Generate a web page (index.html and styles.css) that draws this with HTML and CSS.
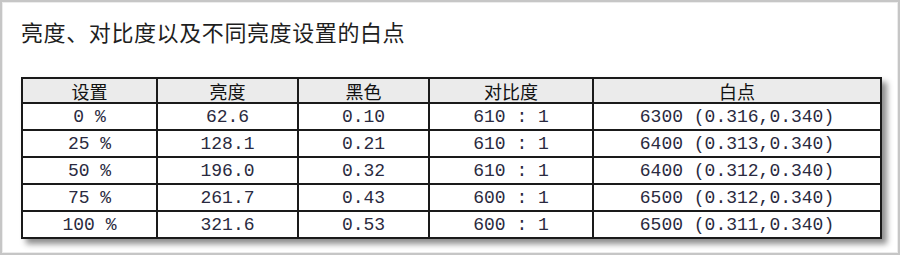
FILE: index.html
```html
<!DOCTYPE html>
<html lang="zh">
<head>
<meta charset="utf-8">
<link rel="stylesheet" href="styles.css">
</head>
<body>
<div class="frame">
  <h1 class="title">亮度、对比度以及不同亮度设置的白点</h1>
  <table class="data">
    <colgroup>
      <col class="c1"><col class="c2"><col class="c3"><col class="c4"><col class="c5">
    </colgroup>
    <thead>
      <tr><th>设置</th><th>亮度</th><th>黑色</th><th>对比度</th><th>白点</th></tr>
    </thead>
    <tbody>
      <tr><td>0 %</td><td>62.6</td><td>0.10</td><td>610 : 1</td><td>6300 (0.316,0.340)</td></tr>
      <tr><td>25 %</td><td>128.1</td><td>0.21</td><td>610 : 1</td><td>6400 (0.313,0.340)</td></tr>
      <tr><td>50 %</td><td>196.0</td><td>0.32</td><td>610 : 1</td><td>6400 (0.312,0.340)</td></tr>
      <tr><td>75 %</td><td>261.7</td><td>0.43</td><td>600 : 1</td><td>6500 (0.312,0.340)</td></tr>
      <tr><td>100 %</td><td>321.6</td><td>0.53</td><td>600 : 1</td><td>6500 (0.311,0.340)</td></tr>
    </tbody>
  </table>
</div>
</body>
</html>
```
FILE: styles.css
```css
html, body {
  margin: 0;
  padding: 0;
  background: #ffffff;
}
.frame {
  box-sizing: border-box;
  width: 900px;
  height: 255px;
  border: 2px solid #c6c6c6;
  box-shadow: inset 0 0 0 1px #ececec;
  padding: 16px 0 0 19px;
  background: #ffffff;
}
.title {
  margin: 0;
  font-family: "Noto Sans CJK SC", sans-serif;
  font-weight: normal;
  font-size: 22px;
  line-height: 26px;
  color: #1e1e1e;
  letter-spacing: 0.6px;
}
.data {
  margin-top: 33px;
  border-collapse: collapse;
  table-layout: fixed;
  width: 859px;
  border: 2px solid #1a1a1a;
  box-shadow: 5px 5px 6px rgba(0, 0, 0, 0.45);
  background: #ffffff;
}
.c1 { width: 135px; }
.c2 { width: 141px; }
.c3 { width: 131px; }
.c4 { width: 164px; }
.c5 { width: 288px; }
.data th,
.data td {
  border: 2px solid #1a1a1a;
  padding: 0;
  text-align: center;
  white-space: pre;
}
.data th {
  height: 23px;
  background: #ebebeb;
  font-family: "Noto Sans CJK SC", sans-serif;
  font-weight: normal;
  font-size: 18px;
  line-height: 20px;
  color: #111111;
}
.data td {
  height: 25px;
  font-family: "Liberation Mono", "Courier New", monospace;
  font-size: 18px;
  line-height: 20px;
  color: #2a2a40;
}
```
